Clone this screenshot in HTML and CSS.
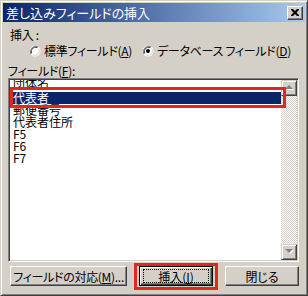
FILE: index.html
```html
<!DOCTYPE html>
<html lang="ja">
<head>
<meta charset="utf-8">
<title>差し込みフィールドの挿入</title>
<link rel="stylesheet" href="styles.css">
</head>
<body>
<div class="dialog">
  <div class="titlebar">
    <span class="title">差し込みフィールドの挿入</span>
    <span class="close"><svg width="8" height="7" viewBox="0 0 8 7"><path d="M0 0h2l2 2 2-2h2v1l-2.5 2.5 2.5 2.5v1h-2l-2-2-2 2h-2v-1l2.5-2.5-2.5-2.5z" fill="#000"/></svg></span>
  </div>
  <div class="content">
    <div class="label first">挿入 :</div>
    <div class="radios">
      <div class="radio first"><svg class="circle" width="12" height="12" viewBox="0 0 12 12"><circle cx="6" cy="6" r="5.5" fill="#fff"/><path d="M1.8 9.2A5.5 5.5 0 0 1 9.2 1.8" stroke="#808080" stroke-width="1" fill="none"/><path d="M2.6 8.4A4.4 4.4 0 0 1 8.4 2.6" stroke="#404040" stroke-width="1" fill="none"/><path d="M3.5 9.8A4.6 4.6 0 0 0 9.8 3.5" stroke="#d4d0c8" stroke-width="1" fill="none"/></svg><span>標準フィールド(<u>A</u>)</span></div>
      <div class="radio"><svg class="circle" width="12" height="12" viewBox="0 0 12 12"><circle cx="6" cy="6" r="5.5" fill="#fff"/><path d="M1.8 9.2A5.5 5.5 0 0 1 9.2 1.8" stroke="#808080" stroke-width="1" fill="none"/><path d="M2.6 8.4A4.4 4.4 0 0 1 8.4 2.6" stroke="#404040" stroke-width="1" fill="none"/><path d="M3.5 9.8A4.6 4.6 0 0 0 9.8 3.5" stroke="#d4d0c8" stroke-width="1" fill="none"/><circle cx="6" cy="6" r="2" fill="#000"/></svg><span>データベース フィールド(<u>D</u>)</span></div>
    </div>
    <div class="label">フィールド(<u>F</u>):</div>
    <div class="list">
      <div class="viewport">
        <div class="item partial">団体名</div>
        <div class="item selected">代表者</div>
        <div class="item">郵便番号</div>
        <div class="item">代表者住所</div>
        <div class="item">F5</div>
        <div class="item">F6</div>
        <div class="item">F7</div>
      </div>
      <div class="scrollbar">
        <div class="sbtn"><svg width="9" height="6" viewBox="0 0 9 6"><path d="M5 1l4 4H1z" fill="#fff"/><path d="M4 0l4 4H0z" fill="#808080"/></svg></div>
        <div class="track"></div>
        <div class="sbtn"><svg width="9" height="6" viewBox="0 0 9 6"><path d="M1 1h8L5 5z" fill="#fff"/><path d="M0 0h8L4 4z" fill="#808080"/></svg></div>
      </div>
      <div class="mark"></div>
    </div>
    <div class="buttons">
      <div class="btn wide">フィールドの対応(<u>M</u>)...</div>
      <div class="btn default"><span class="focus">挿入(<u>I</u>)</span></div>
      <div class="btn">閉じる</div>
    </div>
  </div>
</div>
</body>
</html>
```

FILE: styles.css
```css
* { box-sizing: border-box; }
html, body { margin: 0; padding: 0; }
body {
  width: 308px;
  height: 296px;
  overflow: hidden;
  background: #d4d0c8;
  color: #000;
  font-family: "Noto Sans CJK JP", "Noto Sans", sans-serif;
  font-size: 12px;
  font-feature-settings: "palt";
}
u { text-decoration: underline; text-underline-offset: 1px; }

.dialog {
  width: 308px;
  height: 296px;
  border: 1px solid;
  border-color: #d4d0c8 #404040 #404040 #d4d0c8;
  box-shadow: inset 1px 1px #fff, inset -1px -1px #808080;
  padding: 2px;
  background: #d4d0c8;
  display: flex;
  flex-direction: column;
}

.titlebar {
  flex: none;
  height: 19px;
  display: flex;
  align-items: center;
  justify-content: space-between;
  padding: 0 2px 0 3px;
  background: linear-gradient(to right, #0a246a, #a6caf0);
}
.title {
  color: #fff;
  font-size: 13px;
  line-height: 19px;
  white-space: nowrap;
}
.close {
  width: 16px;
  height: 14px;
  display: flex;
  align-items: center;
  justify-content: center;
  background: #d4d0c8;
  border: 1px solid;
  border-color: #fff #404040 #404040 #fff;
  box-shadow: inset -1px -1px #808080;
}

.content {
  flex: 1;
  display: flex;
  flex-direction: column;
  padding: 0 6px 0 5px;
}
.label {
  margin-top: 6px;
  height: 14px;
  line-height: 14px;
  white-space: nowrap;
  letter-spacing: -0.3px;
}
.label.first { padding-left: 2px; }

.radios {
  margin-top: 2px;
  height: 14px;
  display: flex;
  align-items: center;
  padding-left: 21px;
}
.radio {
  display: flex;
  align-items: center;
  gap: 3px;
  line-height: 14px;
  white-space: nowrap;
  letter-spacing: -0.3px;
}
.radio.first { width: 113px; }
.circle { flex: none; }

.list {
  position: relative;
  height: 184px;
  display: flex;
  padding: 1px;
  background: #fff;
  border: 1px solid;
  border-color: #808080 #fff #fff #808080;
  box-shadow: inset 1px 1px #404040, inset -1px -1px #d4d0c8;
}
.viewport {
  flex: 1;
  overflow: hidden;
  display: flex;
  flex-direction: column;
}
.item {
  flex: none;
  height: 12px;
  line-height: 12px;
  padding-left: 3px;
  white-space: nowrap;
}
.item.partial {
  height: 15px;
  margin-top: -3px;
}
.item.selected {
  background: #0a246a;
  color: #fff;
}

.scrollbar {
  flex: none;
  width: 16px;
  display: flex;
  flex-direction: column;
}
.sbtn {
  flex: none;
  height: 16px;
  display: flex;
  align-items: center;
  justify-content: center;
  background: #d4d0c8;
  border: 1px solid;
  border-color: #d4d0c8 #404040 #404040 #d4d0c8;
  box-shadow: inset 1px 1px #fff, inset -1px -1px #808080;
}
.track {
  flex: 1;
  background: repeating-conic-gradient(#d4d0c8 0 25%, #fff 0 50%) 0 0 / 2px 2px;
}

.mark {
  position: absolute;
  left: 1px;
  top: 8px;
  width: 276px;
  height: 21px;
  border: 3px solid #e3261e;
}

.buttons {
  margin-top: 4px;
  padding-left: 2px;
  display: flex;
  justify-content: space-between;
}
.btn {
  position: relative;
  width: 74px;
  height: 20px;
  display: flex;
  align-items: center;
  justify-content: center;
  white-space: nowrap;
  background: #d4d0c8;
  border: 1px solid;
  border-color: #fff #404040 #404040 #fff;
  box-shadow: inset -1px -1px #808080;
}
.btn.wide { width: 117px; letter-spacing: -0.3px; }
.btn.default {
  border-color: #000;
  box-shadow: inset 1px 1px #fff, inset -1px -1px #404040, inset -2px -2px #808080;
}
.btn.default::after {
  content: "";
  position: absolute;
  top: -4px;
  left: -6px;
  right: -6px;
  bottom: -5px;
  border: 3px solid #e3261e;
}
.focus {
  display: flex;
  align-items: center;
  justify-content: center;
  width: 66px;
  height: 14px;
  border: 1px dotted #000;
}
```
